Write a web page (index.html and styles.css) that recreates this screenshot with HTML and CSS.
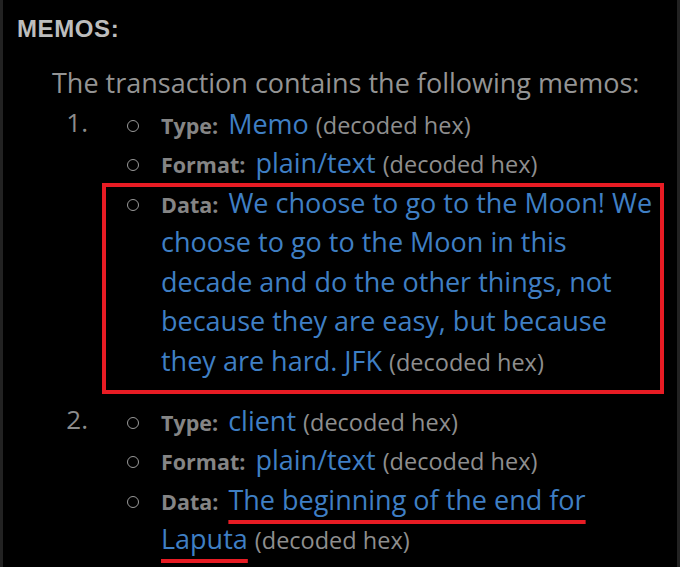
FILE: index.html
```html
<!DOCTYPE html>
<html lang="en">
<head>
<meta charset="utf-8">
<title>Memos</title>
<link rel="stylesheet" href="styles.css">
</head>
<body>
<div class="panel">
  <h2 class="title">MEMOS:</h2>
  <p class="intro">The transaction contains the following memos:</p>
  <ol class="memos">
    <li class="memo">
      <span class="num">1.</span>
      <ul class="fields">
        <li class="field"><span class="dot"></span><div class="body"><b class="label">Type:</b> <span class="val">Memo</span> <span class="hint">(decoded hex)</span></div></li>
        <li class="field"><span class="dot"></span><div class="body"><b class="label">Format:</b> <span class="val">plain/text</span> <span class="hint">(decoded hex)</span></div></li>
        <li class="field boxed"><span class="dot"></span><div class="body"><b class="label">Data:</b> <span class="val">We choose to go to the Moon! We choose to go to the Moon in this decade and do the other things, not because they are easy, but because they are hard. JFK</span> <span class="hint">(decoded hex)</span></div></li>
      </ul>
    </li>
    <li class="memo">
      <span class="num">2.</span>
      <ul class="fields">
        <li class="field"><span class="dot"></span><div class="body"><b class="label">Type:</b> <span class="val">client</span> <span class="hint">(decoded hex)</span></div></li>
        <li class="field"><span class="dot"></span><div class="body"><b class="label">Format:</b> <span class="val">plain/text</span> <span class="hint">(decoded hex)</span></div></li>
        <li class="field"><span class="dot"></span><div class="body"><b class="label">Data:</b> <span class="val marked">The beginning of the end for Laputa</span> <span class="hint">(decoded hex)</span></div></li>
      </ul>
    </li>
  </ol>
</div>
</body>
</html>
```

FILE: styles.css
```css
* { box-sizing: border-box; }
html, body {
  margin: 0;
  padding: 0;
  background: #000;
}
.panel {
  min-height: 567px;
  background: #000;
  border-left: 3px solid #222;
  border-right: 3px solid #222;
  padding: 13px 20px 0 0;
  font-family: "Open Sans", sans-serif;
}
.title {
  margin: 0 0 0 14px;
  font-family: "Liberation Sans", Arial, sans-serif;
  font-weight: bold;
  font-size: 24px;
  line-height: 32px;
  color: #bdbdbd;
  letter-spacing: 0.6px;
}
.intro {
  margin: 19.5px 0 0 49px;
  font-size: 27px;
  line-height: 36px;
  color: #949494;
}
.memos {
  list-style: none;
  margin: 2.3px 0 0;
  padding: 0 0 0 49px;
}
.memo {
  display: grid;
  grid-template-columns: 36px 1fr;
  align-items: baseline;
  margin-bottom: 19.5px;
}
.num {
  text-align: right;
  font-size: 26px;
  line-height: 39.5px;
  color: #8c8c8c;
}
.fields {
  list-style: none;
  margin: 0;
  padding: 0;
}
.field {
  display: grid;
  grid-template-columns: 73px 1fr;
  align-items: start;
  font-size: 27px;
  line-height: 39.5px;
}
.field.boxed { position: relative; }
.field.boxed::after {
  content: "";
  position: absolute;
  left: 14px;
  right: -7px;
  top: 0;
  bottom: -14px;
  border: 4px solid #e81c24;
}
.dot {
  justify-self: end;
  margin-right: 22px;
  margin-top: 16px;
  width: 12px;
  height: 12px;
  border: 1.8px solid #9a9a9a;
  border-radius: 50%;
}
.body {
  color: #8c8c8c;
}
.label {
  font-weight: 700;
  font-size: 21.5px;
  line-height: 1;
  color: #858585;
}
.val {
  font-size: 27px;
  color: #3f7fc4;
  margin-left: 3px;
}
.hint {
  font-size: 23.5px;
  line-height: 1;
  color: #8e8e8e;
}
.marked {
  text-decoration: underline;
  text-decoration-color: #e81c24;
  text-decoration-thickness: 3.5px;
  text-underline-offset: 10px;
  text-decoration-skip-ink: none;
}
```
